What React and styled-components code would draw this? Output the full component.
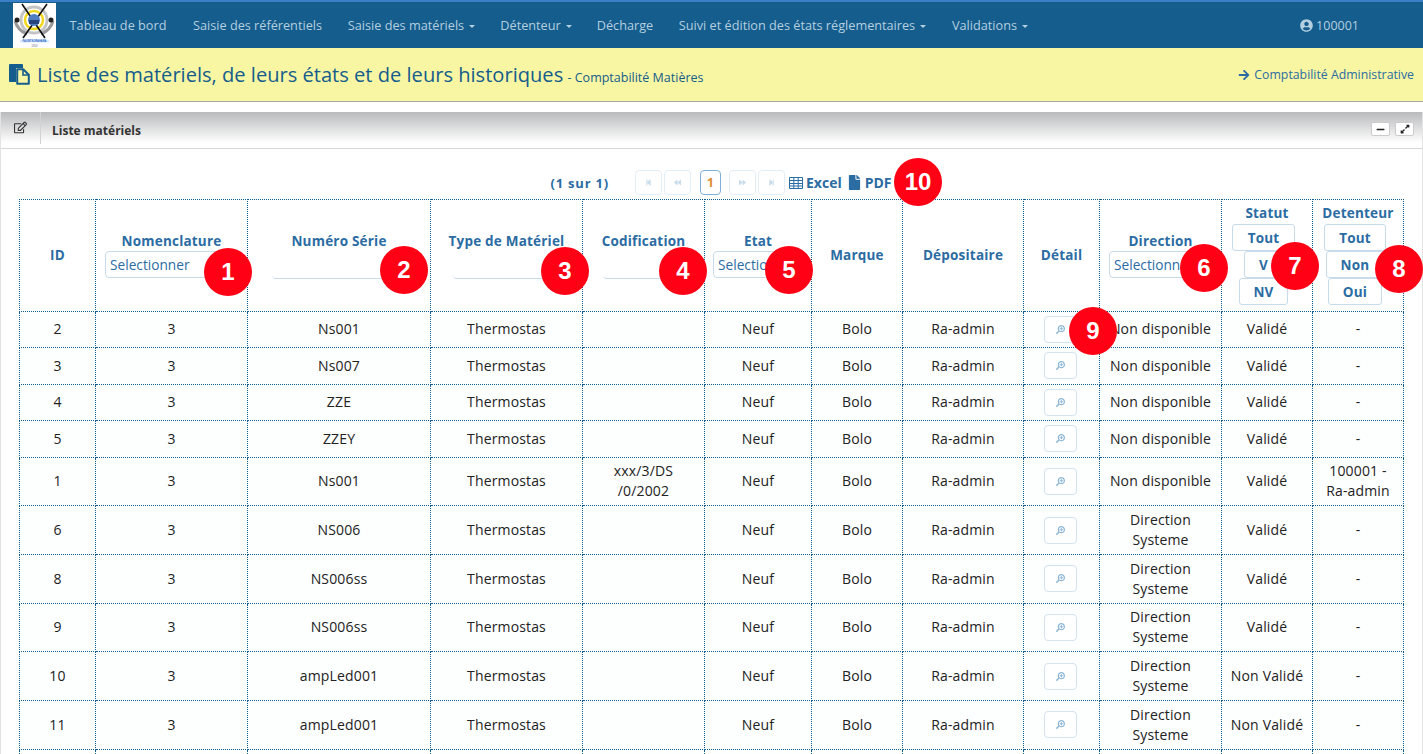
import React from "react";
import styled, { createGlobalStyle } from "styled-components";
import {
  FaArrowRight,
  FaBackward,
  FaExpandAlt,
  FaFile,
  FaForward,
  FaMinus,
  FaRegEdit,
  FaUserCircle,
  FaSearchPlus,
  FaStepBackward,
  FaStepForward,
} from "react-icons/fa";

const columns = [76, 152, 183, 152, 122, 107, 91, 121, 76, 122, 91, 91];

const navItems = [
  { label: "Tableau de bord", w: 125 },
  { label: "Saisie des référentiels", w: 154 },
  { label: "Saisie des matériels", w: 154, caret: true },
  { label: "Détenteur", w: 95, caret: true },
  { label: "Décharge", w: 83 },
  { label: "Suivi et édition des états réglementaires", w: 272, caret: true },
  { label: "Validations", w: 103, caret: true },
];

const dirSys = ["Direction", "Systeme"];
const rows = [
  { id: 2, serie: "Ns001", direction: ["Non disponible"], statut: "Validé" },
  { id: 3, serie: "Ns007", direction: ["Non disponible"], statut: "Validé" },
  { id: 4, serie: "ZZE", direction: ["Non disponible"], statut: "Validé" },
  { id: 5, serie: "ZZEY", direction: ["Non disponible"], statut: "Validé" },
  {
    id: 1,
    serie: "Ns001",
    code: ["xxx/3/DS", "/0/2002"],
    direction: ["Non disponible"],
    statut: "Validé",
    detenteur: ["100001 -", "Ra-admin"],
  },
  { id: 6, serie: "NS006", direction: dirSys, statut: "Validé" },
  { id: 8, serie: "NS006ss", direction: dirSys, statut: "Validé" },
  { id: 9, serie: "NS006ss", direction: dirSys, statut: "Validé" },
  { id: 10, serie: "ampLed001", direction: dirSys, statut: "Non Validé" },
  { id: 11, serie: "ampLed001", direction: dirSys, statut: "Non Validé" },
  { id: 12, serie: "ampLed001", direction: dirSys, statut: "Non Validé" },
];

const badges = [
  { n: 1, x: 228, y: 272 },
  { n: 2, x: 404, y: 270 },
  { n: 3, x: 565, y: 271 },
  { n: 4, x: 683, y: 271 },
  { n: 5, x: 789, y: 270 },
  { n: 6, x: 1204, y: 268 },
  { n: 7, x: 1295, y: 266 },
  { n: 8, x: 1399, y: 269 },
  { n: 9, x: 1093, y: 331 },
  { n: 10, x: 918, y: 182 },
];

const GlobalStyle = createGlobalStyle`
  html, body { margin: 0; padding: 0; height: 754px; overflow: hidden; background: #fff; }
  body { font-family: "Open Sans", "Liberation Sans", sans-serif; font-size: 13px; color: #222; }
`;

const Page = styled.div`
  position: relative;
  width: 1423px;
  height: 754px;
  overflow: hidden;
`;

const Navbar = styled.nav`
  display: flex;
  align-items: center;
  height: 46px;
  padding-left: 13px;
  background: #155d8c;
  border-top: 2px solid #3a80c8;
`;

const LogoBox = styled.div`
  display: flex;
  flex: none;
  width: 43px;
  height: 45px;
  margin-right: -0.5px;
  background: #fff;
`;

const NavLink = styled.a`
  flex: none;
  width: ${(p) => p.$w}px;
  color: #b3cfe0;
  font-size: 12.7px;
  text-align: center;
  white-space: nowrap;
`;

const Caret = styled.span`
  display: inline-block;
  margin-left: 5px;
  vertical-align: 2px;
  border-top: 3.5px solid #b3cfe0;
  border-left: 3.5px solid transparent;
  border-right: 3.5px solid transparent;
`;

const UserLink = styled.div`
  display: flex;
  align-items: center;
  gap: 3px;
  margin-left: auto;
  margin-right: 64px;
  color: #b3cfe0;
  font-size: 12.5px;
`;

const TitleBar = styled.header`
  display: flex;
  align-items: center;
  height: 53px;
  padding: 0 9px 0 9px;
  background: #f8f6a3;
  border-bottom: 1px solid #a8a8a0;
  color: #155d8c;
`;

const PageTitle = styled.h1`
  margin: 0 0 0 7px;
  font-size: 20.1px;
  font-weight: 400;
  white-space: nowrap;
`;

const SubTitle = styled.span`
  margin-left: 1px;
  font-size: 12.5px;
  font-weight: 500;
`;

const SwitchLink = styled.a`
  display: flex;
  align-items: center;
  gap: 4px;
  margin-left: auto;
  color: #2b6ca3;
  font-size: 12.3px;
  font-weight: 500;
`;

const Panel = styled.section`
  margin-top: 10px;
  border-left: 1px solid #e3e3e3;
  border-right: 1px solid #e3e3e3;
`;

const PanelHeader = styled.div`
  display: flex;
  align-items: center;
  height: 36px;
  background: linear-gradient(#b9babc, #ffffff 85%);
  border-bottom: 1px solid #d8d8d8;
`;

const PanelIcon = styled.div`
  display: flex;
  justify-content: center;
  align-items: center;
  width: 39px;
  height: 32px;
  margin-top: -5px;
  border-right: 1px solid #d2d2d2;
  color: #333;
`;

const PanelTitle = styled.h2`
  margin: 0 0 0 11px;
  color: #333;
  font-size: 12px;
  font-weight: 700;
`;

const PanelTools = styled.div`
  display: flex;
  gap: 5px;
  margin-left: auto;
  margin-right: 8px;
  margin-top: -2px;
`;

const ToolButton = styled.button`
  display: flex;
  justify-content: center;
  align-items: center;
  width: 19px;
  height: 14px;
  padding: 0;
  background: #fff;
  border: 1px solid #ccc;
  border-radius: 2px;
  color: #222;
`;

const PanelBody = styled.div`
  padding: 0 19px 0 18px;
`;

const Pager = styled.div`
  box-sizing: border-box;
  display: flex;
  justify-content: center;
  align-items: center;
  height: 50px;
  padding: 17px 0 0 20px;
  color: #2b6ca3;
  font-weight: 700;
`;

const PagerCount = styled.span`
  margin-right: 26px;
  letter-spacing: 0.8px;
`;

const PagerButton = styled.span`
  display: flex;
  justify-content: center;
  align-items: center;
  width: 25px;
  height: 23px;
  margin-right: 2px;
  border: 1px solid #e3eef6;
  border-radius: 4px;
  color: #c9dcea;
`;

const PagerCurrent = styled.span`
  display: flex;
  justify-content: center;
  align-items: center;
  width: 19px;
  height: 23px;
  margin: 0 8px 0 7px;
  border: 1px solid #7fb0dc;
  border-radius: 4px;
  color: #e08a2c;
  font-size: 12px;
`;

const ExportLink = styled.a`
  display: flex;
  align-items: center;
  gap: 3px;
  margin-left: ${(p) => p.$gap}px;
  color: #2b6ca3;
  font-size: 14px;
`;

const Table = styled.table`
  width: 1384px;
  table-layout: fixed;
  border-collapse: collapse;
`;

const HeadCell = styled.th`
  height: 110.5px;
  padding: 0;
  border: 1px dotted #155d8c;
  color: #2b6ca3;
  font-size: 13.5px;
  font-weight: 700;
  letter-spacing: 0.2px;
  text-align: center;
  vertical-align: middle;
`;

const HeadTitle = styled.div`
  line-height: 18px;
  margin-top: ${(p) => (p.$raised ? -2 : 0)}px;
  margin-bottom: ${(p) => (p.$raised ? 2 : 0)}px;
`;

const Cell = styled.td`
  height: ${(p) => (p.$tall ? 48.7 : 36.5)}px;
  padding: 0 4px;
  border: 1px dotted #155d8c;
  background: #fdfefe;
  box-sizing: border-box;
  color: #222;
  font-size: 14px;
  line-height: 20px;
  letter-spacing: 0.15px;
  text-align: center;
  vertical-align: middle;
`;

const SelectBox = styled.div`
  box-sizing: border-box;
  width: ${(p) => p.$w}px;
  height: 27px;
  margin: 1px 0 0 ${(p) => p.$left}px;
  padding-left: 4px;
  background: #fff;
  border: 1px solid #c8dbeb;
  border-radius: 4px;
  color: #2b6ca3;
  font-size: 13.7px;
  font-weight: 400;
  letter-spacing: 0;
  line-height: 25px;
  text-align: left;
  white-space: nowrap;
  overflow: hidden;
`;

const TextFilter = styled.input`
  display: block;
  box-sizing: border-box;
  width: ${(p) => p.$w}px;
  height: 28px;
  margin: 1px 0 -1px ${(p) => p.$left}px;
  background: transparent;
  border: 0;
  border-bottom: 1px solid #c8dbeb;
  border-radius: 4px;
  outline: none;
`;

const ToggleGroup = styled.div`
  display: flex;
  flex-direction: column;
  align-items: center;
  padding-right: ${(p) => p.$shift}px;
`;

const Toggle = styled.span`
  box-sizing: border-box;
  width: ${(p) => p.$w}px;
  height: 27px;
  background: #fff;
  border: 1px solid #c8dbeb;
  border-radius: 3px;
  line-height: 26px;
`;

const DetailButton = styled.button`
  display: inline-flex;
  justify-content: center;
  align-items: center;
  width: 33px;
  height: 27px;
  margin-right: 2px;
  padding: 0;
  background: #fff;
  border: 1px solid #d3e3f0;
  border-radius: 4px;
  color: #8fb8d8;
  vertical-align: middle;
`;

const Badge = styled.div`
  position: absolute;
  left: ${(p) => p.$x - 24}px;
  top: ${(p) => p.$y - 24}px;
  display: flex;
  justify-content: center;
  align-items: center;
  width: 48px;
  height: 48px;
  background: #ff0015;
  border-radius: 50%;
  color: #fff;
  font-family: "Liberation Sans", sans-serif;
  font-size: 24px;
  font-weight: 700;
`;

const Logo = () => (
  <svg width="43" height="45" viewBox="0 0 43 45">
    <circle cx="21" cy="17" r="13" fill="none" stroke="#c4c4c4" strokeWidth="3" />
    <path d="M2 18c2 7 7 11 12 13M40 18c-2 7-7 11-12 13" fill="none" stroke="#9a9a9a" strokeWidth="3" />
    <circle cx="4" cy="17" r="2.5" fill="#222" />
    <circle cx="38" cy="17" r="2.5" fill="#222" />
    <circle cx="21" cy="17" r="9" fill="none" stroke="#f3d71c" strokeWidth="2.5" />
    <path d="M9 1l23 34M34 1L10 35" stroke="#111" strokeWidth="1.6" />
    <circle cx="21" cy="17" r="6" fill="#4f7fc0" />
    <path d="M16 17h10v4h-10z" fill="#27457c" />
    <rect x="7" y="37" width="29" height="2.5" fill="#dbe8ff" />
    <text x="21.5" y="39.3" fontSize="2.6" fontWeight="700" fill="#2b6cc4" textAnchor="middle" fontFamily="Liberation Sans">
      FAONTSORAHANA
    </text>
    <text x="21.5" y="43.5" fontSize="2.6" fill="#666" textAnchor="middle" fontFamily="Liberation Sans">
      1820
    </text>
  </svg>
);

// fa-files-o : back sheet filled, front sheet outlined with a folded corner
const FilesIcon = () => (
  <svg width="21" height="21" viewBox="0 0 21 21">
    <path d="M1 0h12a1 1 0 0 1 1 1v3H7v14H1a1 1 0 0 1-1-1V1a1 1 0 0 1 1-1z" fill="#155d8c" />
    <path d="M8.2 5.2h6l5.6 5.6v9H8.2z" fill="#f8f6a3" stroke="#155d8c" strokeWidth="2" strokeLinejoin="round" />
    <path d="M14 5v6h6" fill="none" stroke="#155d8c" strokeWidth="1.6" />
  </svg>
);

const TableIcon = () => (
  <svg width="14" height="12" viewBox="0 0 14 12" fill="none" stroke="#2b6ca3" strokeWidth="1">
    <path d="M.5.5h13v11H.5zM.5 3.5h13M.5 6.5h13M.5 9h13M4.8.5v11M9.2.5v11" />
  </svg>
);

const MultiLine = ({ lines }) => lines.map((l) => <div key={l}>{l}</div>);

export default function App() {
  return (
    <Page>
      <GlobalStyle />
      <Navbar>
        <LogoBox>
          <Logo />
        </LogoBox>
        {navItems.map((item) => (
          <NavLink key={item.label} $w={item.w}>
            {item.label}
            {item.caret && <Caret />}
          </NavLink>
        ))}
        <UserLink>
          <FaUserCircle size={13} />
          100001
        </UserLink>
      </Navbar>
      <TitleBar>
        <FilesIcon />
        <PageTitle>
          Liste des matériels, de leurs états et de leurs historiques
          <SubTitle> - Comptabilité Matières</SubTitle>
        </PageTitle>
        <SwitchLink>
          <FaArrowRight size={12} />
          Comptabilité Administrative
        </SwitchLink>
      </TitleBar>
      <Panel>
        <PanelHeader>
          <PanelIcon>
            <FaRegEdit size={13} />
          </PanelIcon>
          <PanelTitle>Liste matériels</PanelTitle>
          <PanelTools>
            <ToolButton>
              <FaMinus size={9} />
            </ToolButton>
            <ToolButton>
              <FaExpandAlt size={10} />
            </ToolButton>
          </PanelTools>
        </PanelHeader>
        <PanelBody>
          <Pager>
            <PagerCount>(1 sur 1)</PagerCount>
            <PagerButton>
              <FaStepBackward size={7} />
            </PagerButton>
            <PagerButton>
              <FaBackward size={7} />
            </PagerButton>
            <PagerCurrent>1</PagerCurrent>
            <PagerButton>
              <FaForward size={7} />
            </PagerButton>
            <PagerButton>
              <FaStepForward size={7} />
            </PagerButton>
            <ExportLink $gap={2}>
              <TableIcon />
              Excel
            </ExportLink>
            <ExportLink $gap={5}>
              <FaFile size={15} />
              PDF
            </ExportLink>
          </Pager>
          <Table>
            <colgroup>
              {columns.map((w, i) => (
                <col key={i} style={{ width: w }} />
              ))}
            </colgroup>
            <thead>
              <tr>
                <HeadCell>ID</HeadCell>
                <HeadCell>
                  <HeadTitle>Nomenclature</HeadTitle>
                  <SelectBox $w={126} $left={9}>Selectionner</SelectBox>
                </HeadCell>
                <HeadCell>
                  <HeadTitle>Numéro Série</HeadTitle>
                  <TextFilter $w={130} $left={24} />
                </HeadCell>
                <HeadCell>
                  <HeadTitle>Type de Matériel</HeadTitle>
                  <TextFilter $w={110} $left={22} />
                </HeadCell>
                <HeadCell>
                  <HeadTitle>Codification</HeadTitle>
                  <TextFilter $w={90} $left={20} />
                </HeadCell>
                <HeadCell>
                  <HeadTitle>Etat</HeadTitle>
                  <SelectBox $w={80} $left={8}>Selectionner</SelectBox>
                </HeadCell>
                <HeadCell>Marque</HeadCell>
                <HeadCell>Dépositaire</HeadCell>
                <HeadCell>Détail</HeadCell>
                <HeadCell>
                  <HeadTitle>Direction</HeadTitle>
                  <SelectBox $w={100} $left={9}>Selectionner</SelectBox>
                </HeadCell>
                <HeadCell>
                  <HeadTitle $raised>Statut</HeadTitle>
                  <ToggleGroup $shift={7}>
                    <Toggle $w={63}>Tout</Toggle>
                    <Toggle $w={40}>V</Toggle>
                    <Toggle $w={49}>NV</Toggle>
                  </ToggleGroup>
                </HeadCell>
                <HeadCell>
                  <HeadTitle $raised>Detenteur</HeadTitle>
                  <ToggleGroup $shift={6}>
                    <Toggle $w={62}>Tout</Toggle>
                    <Toggle $w={58}>Non</Toggle>
                    <Toggle $w={54}>Oui</Toggle>
                  </ToggleGroup>
                </HeadCell>
              </tr>
            </thead>
            <tbody>
              {rows.map((r) => {
                const tall = r.direction.length > 1 || !!r.code;
                return (
                  <tr key={r.id}>
                    <Cell $tall={tall}>{r.id}</Cell>
                    <Cell>3</Cell>
                    <Cell>{r.serie}</Cell>
                    <Cell>Thermostas</Cell>
                    <Cell>{r.code && <MultiLine lines={r.code} />}</Cell>
                    <Cell>Neuf</Cell>
                    <Cell>Bolo</Cell>
                    <Cell>Ra-admin</Cell>
                    <Cell>
                      <DetailButton>
                        <FaSearchPlus size={9} style={{ transform: "scaleX(-1)" }} />
                      </DetailButton>
                    </Cell>
                    <Cell>
                      <MultiLine lines={r.direction} />
                    </Cell>
                    <Cell>{r.statut}</Cell>
                    <Cell>{r.detenteur ? <MultiLine lines={r.detenteur} /> : "-"}</Cell>
                  </tr>
                );
              })}
            </tbody>
          </Table>
        </PanelBody>
      </Panel>
      {badges.map((b) => (
        <Badge key={b.n} $x={b.x} $y={b.y}>
          {b.n}
        </Badge>
      ))}
    </Page>
  );
}
